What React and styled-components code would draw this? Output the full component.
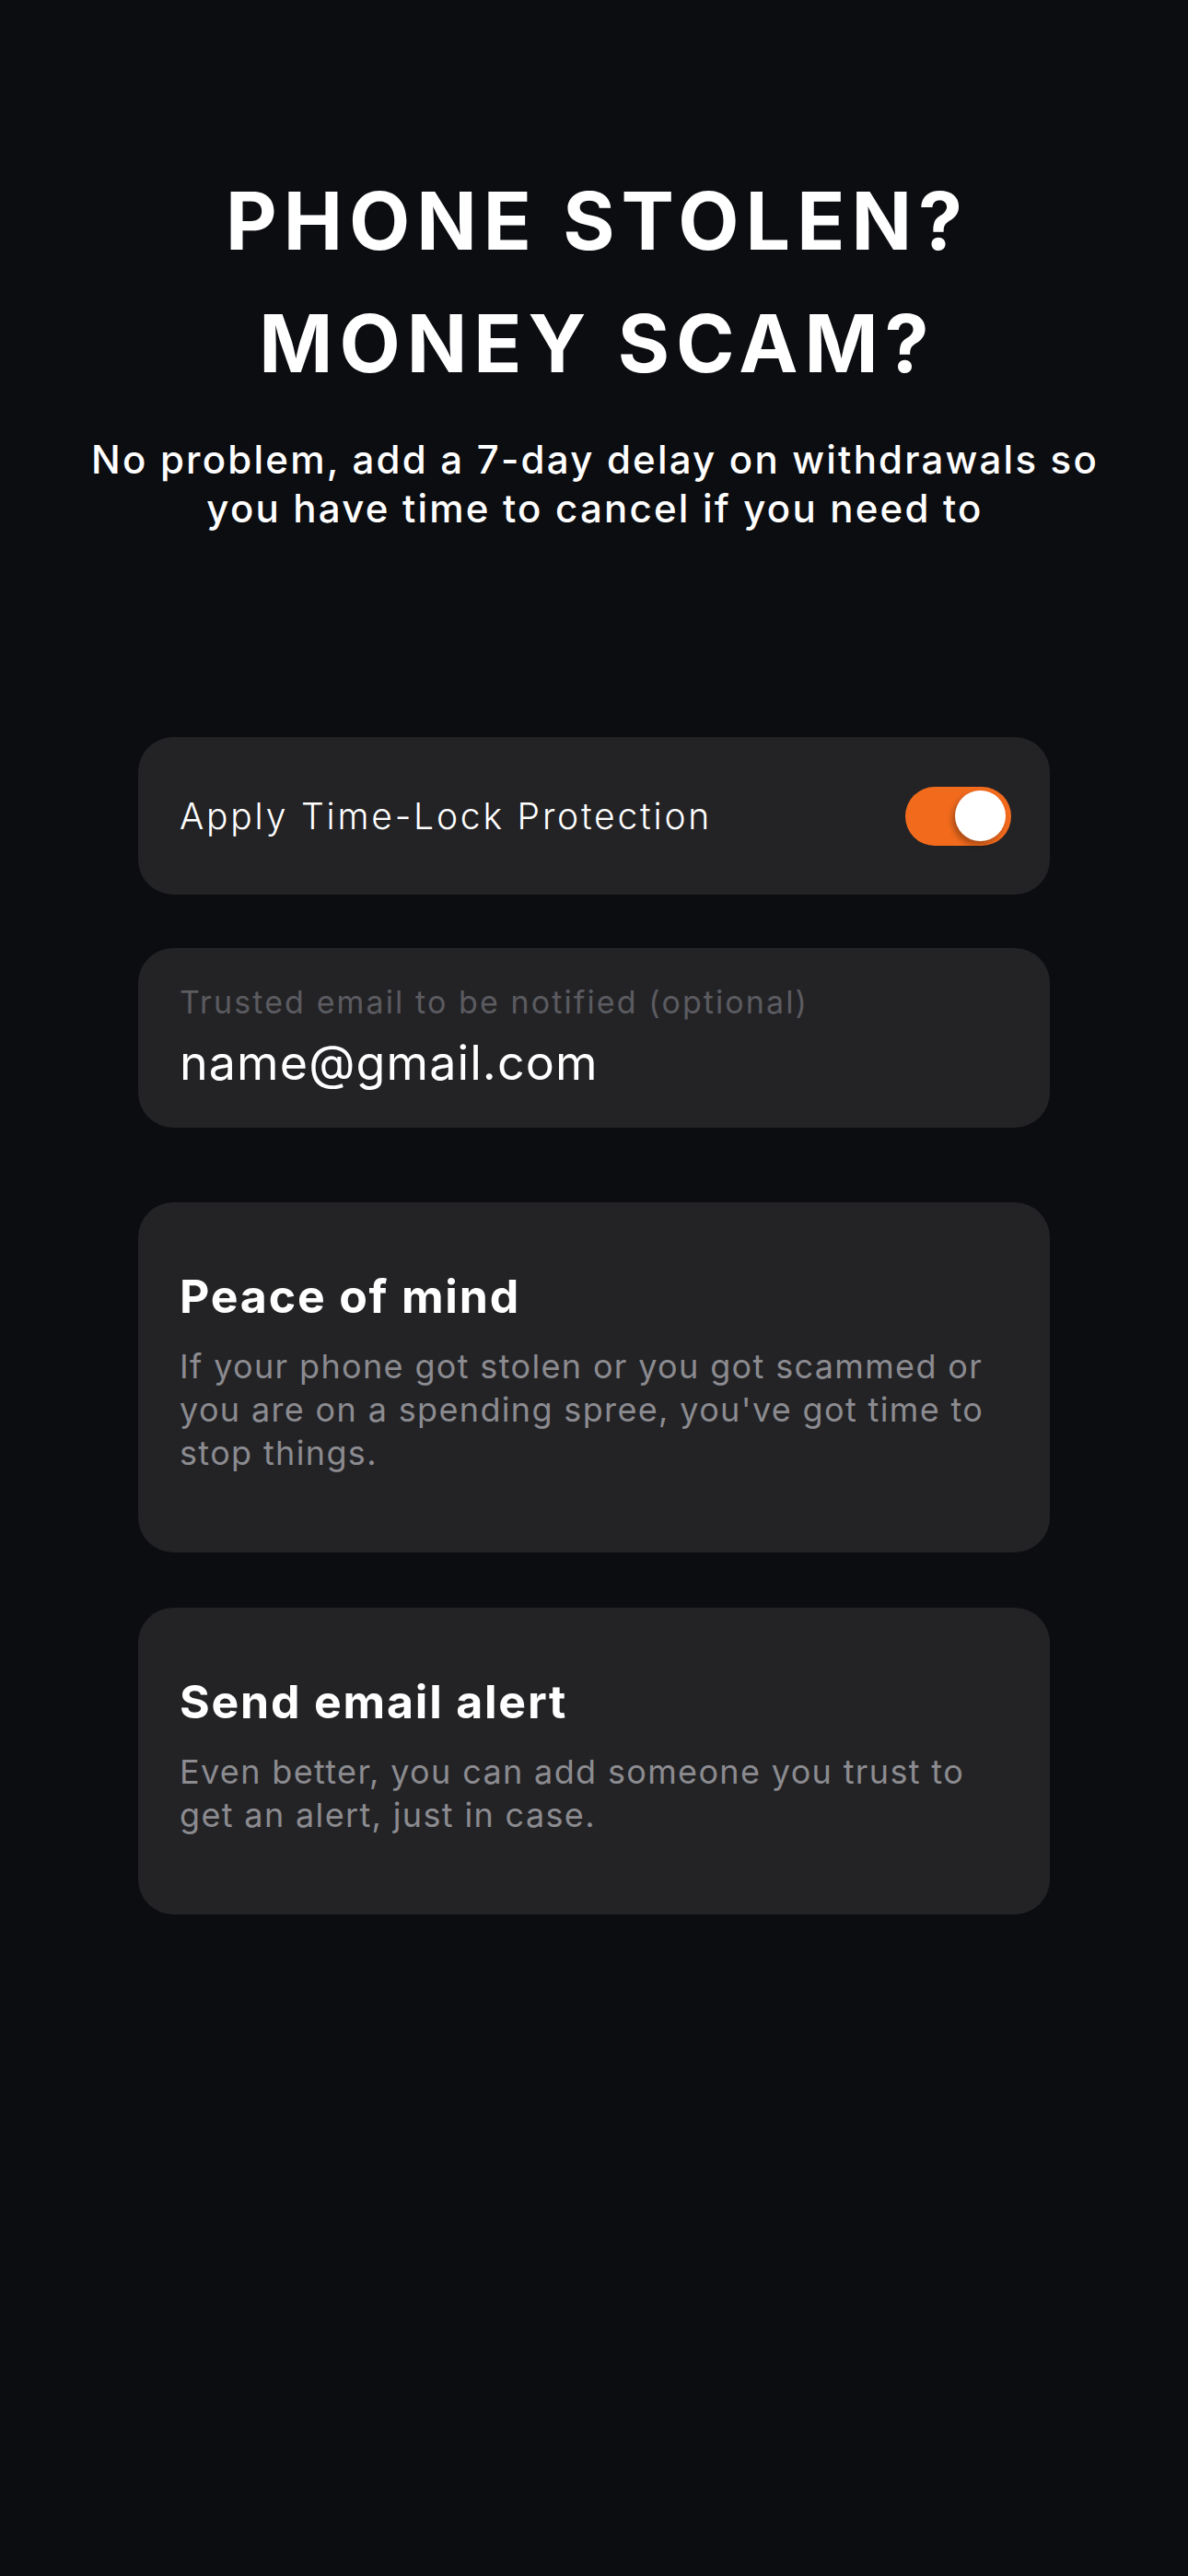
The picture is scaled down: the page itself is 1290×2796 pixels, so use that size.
import React, { useState } from 'react';
import styled, { createGlobalStyle } from 'styled-components';

const GlobalStyle = createGlobalStyle`
  html, body {
    margin: 0;
    padding: 0;
    background: #0c0d11;
  }
  body {
    font-family: Inter, "Noto Sans", sans-serif;
    color: #ffffff;
    -webkit-font-smoothing: antialiased;
  }
`;

const Page = styled.div`
  min-height: 2796px;
  width: 1290px;
  margin: 0 auto;
  background: #0c0d11;
  display: flex;
  flex-direction: column;
  align-items: center;
  padding-top: 174px;
  box-sizing: border-box;
`;

const Title = styled.h1`
  margin: 0;
  padding-left: 7px;
  font-size: 86px;
  line-height: 133px;
  font-weight: 700;
  letter-spacing: 7px;
  text-align: center;
`;

const Subtitle = styled.p`
  margin: 0;
  margin-top: 32px;
  padding-left: 2px;
  font-size: 42px;
  line-height: 53px;
  font-weight: 500;
  text-align: center;
  letter-spacing: 2.2px;
`;

const Cards = styled.div`
  width: 990px;
  margin-top: 222px;
  display: flex;
  flex-direction: column;
`;

const Card = styled.div`
  background: #232326;
  border-radius: 38px;
  box-sizing: border-box;
  margin-top: ${p => p.$gap || 0}px;
`;

const ToggleRow = styled(Card)`
  height: 171px;
  padding: 0 42px 0 45px;
  display: flex;
  align-items: center;
  justify-content: space-between;
`;

const RowLabel = styled.span`
  font-size: 39px;
  font-weight: 300;
  letter-spacing: 2.8px;
`;

const Switch = styled.button`
  width: 115px;
  height: 64px;
  border-radius: 32px;
  border: none;
  background: ${p => (p.$on ? '#f26b1d' : '#3a3a3e')};
  display: flex;
  align-items: center;
  justify-content: ${p => (p.$on ? 'flex-end' : 'flex-start')};
  padding: 0 6px;
  box-sizing: border-box;
  cursor: pointer;
`;

const Knob = styled.span`
  width: 55px;
  height: 55px;
  border-radius: 50%;
  background: #ffffff;
  box-shadow: -3px 4px 6px rgba(0, 0, 0, 0.3);
`;

const Field = styled(Card)`
  height: 195px;
  padding: 0 45px;
  display: flex;
  flex-direction: column;
  justify-content: center;
  gap: 15px;
`;

const FieldLabel = styled.label`
  font-size: 34px;
  line-height: 40px;
  font-weight: 400;
  letter-spacing: 2.1px;
  color: #5b5b60;
`;

const FieldInput = styled.input`
  background: transparent;
  border: none;
  outline: none;
  padding: 0;
  margin: 0;
  font-family: inherit;
  font-size: 52px;
  line-height: 62px;
  font-weight: 400;
  letter-spacing: 1.1px;
  color: #ffffff;
`;

const InfoCard = styled(Card)`
  padding: 72px 45px 84px;
`;

const InfoTitle = styled.h2`
  margin: 0;
  font-size: 50px;
  line-height: 60px;
  font-weight: 700;
  letter-spacing: 1.8px;
`;

const InfoText = styled.p`
  margin: 23px 0 0;
  font-size: 36px;
  line-height: 47px;
  font-weight: 400;
  letter-spacing: 1.35px;
  color: #8b8b90;
`;

export default function App() {
  const [locked, setLocked] = useState(true);

  return (
    <>
      <GlobalStyle />
      <Page>
        <Title>
          PHONE STOLEN?
          <br />
          MONEY SCAM?
        </Title>
        <Subtitle>
          No problem, add a 7-day delay on withdrawals so
          <br />
          you have time to cancel if you need to
        </Subtitle>

        <Cards>
          <ToggleRow>
            <RowLabel>Apply Time-Lock Protection</RowLabel>
            <Switch
              role="switch"
              aria-checked={locked}
              $on={locked}
              onClick={() => setLocked(!locked)}
            >
              <Knob />
            </Switch>
          </ToggleRow>

          <Field $gap={58}>
            <FieldLabel htmlFor="trusted-email">Trusted email to be notified (optional)</FieldLabel>
            <FieldInput id="trusted-email" defaultValue="name@gmail.com" />
          </Field>

          <InfoCard $gap={81}>
            <InfoTitle>Peace of mind</InfoTitle>
            <InfoText>
              If your phone got stolen or you got scammed or
              <br />
              you are on a spending spree, you've got time to
              <br />
              stop things.
            </InfoText>
          </InfoCard>

          <InfoCard $gap={60}>
            <InfoTitle>Send email alert</InfoTitle>
            <InfoText>
              Even better, you can add someone you trust to
              <br />
              get an alert, just in case.
            </InfoText>
          </InfoCard>
        </Cards>
      </Page>
    </>
  );
}
